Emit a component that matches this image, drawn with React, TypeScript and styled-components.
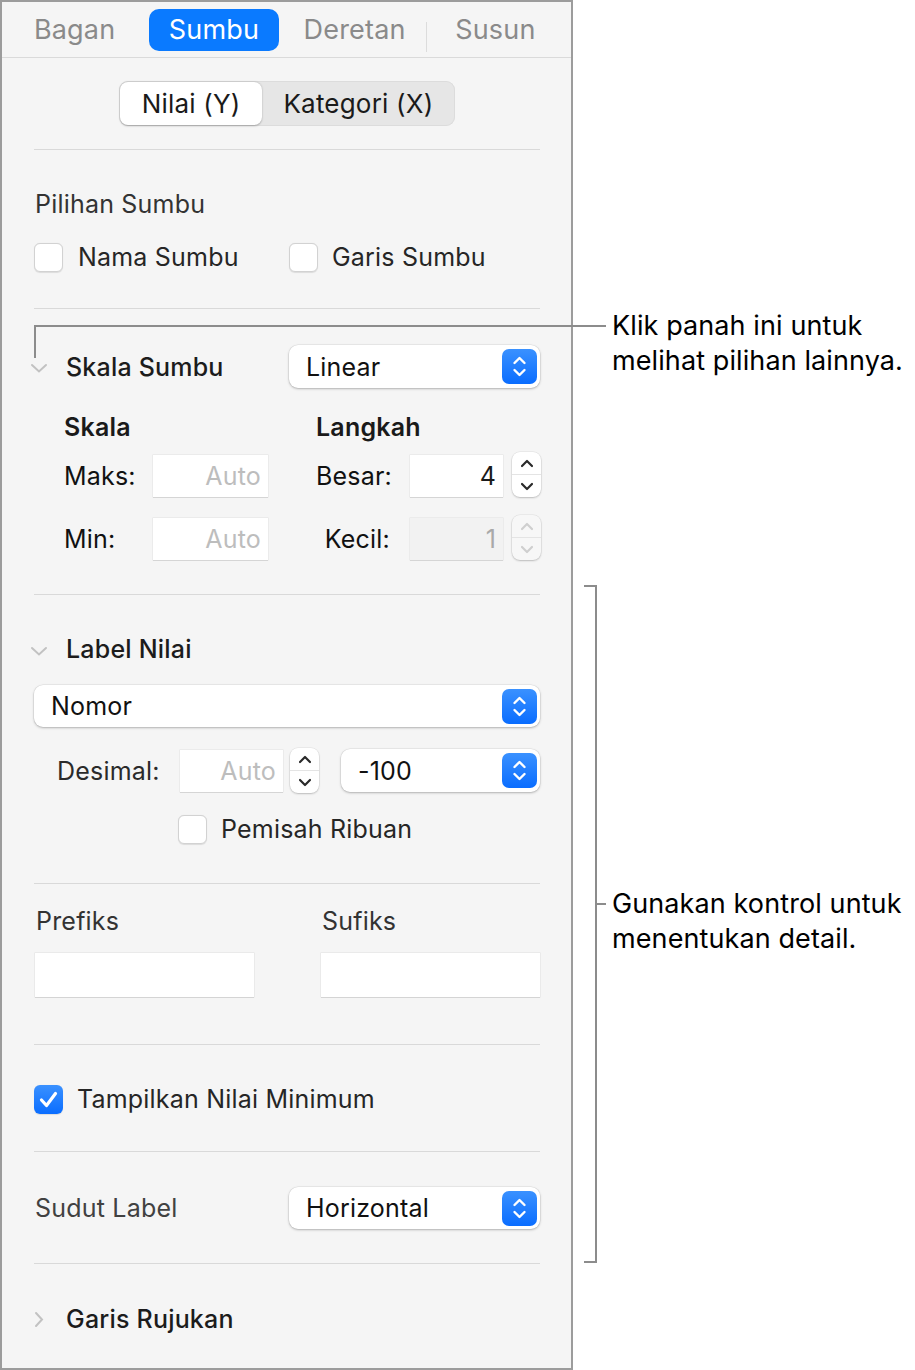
import React from 'react';
import styled, { createGlobalStyle } from 'styled-components';

const GlobalStyle = createGlobalStyle`
  html, body {
    margin: 0;
    padding: 0;
    background: #fff;
  }
  body {
    font-family: Inter, "Liberation Sans", sans-serif;
    font-size: 25px;
    letter-spacing: 0.2px;
    -webkit-font-smoothing: antialiased;
  }
`;

const tabs = ['Bagan', 'Sumbu', 'Deretan', 'Susun'];

const UpDown = () => (
  <svg width="35" height="35" viewBox="0 0 35 35">
    <path
      d="M12.5 14 L17.5 9 L22.5 14 M12.5 21 L17.5 26 L22.5 21"
      fill="none"
      stroke="#fff"
      strokeWidth="2.4"
      strokeLinecap="round"
      strokeLinejoin="round"
    />
  </svg>
);

const Disclosure: React.FC<{ open?: boolean }> = ({ open }) =>
  open ? (
    <svg width="18" height="11" viewBox="0 0 18 11">
      <path d="M2 2 L9 8.5 L16 2" fill="none" stroke="#c2c2c2" strokeWidth="2" strokeLinecap="round" />
    </svg>
  ) : (
    <svg width="10" height="17" viewBox="0 0 10 17">
      <path d="M2 2 L8 8.5 L2 15" fill="none" stroke="#c2c2c2" strokeWidth="2" strokeLinecap="round" />
    </svg>
  );

const PopUp: React.FC<{ value: string; h?: number }> = ({ value, h = 43 }) => (
  <PopButton $h={h}>
    <span>{value}</span>
    <PopBadge>
      <UpDown />
    </PopBadge>
  </PopButton>
);

const Stepper: React.FC<{ disabled?: boolean }> = ({ disabled }) => {
  const c = disabled ? '#cfcfcf' : '#2a2a2a';
  return (
    <StepBox $disabled={disabled}>
      <StepHalf>
        <svg width="14" height="9" viewBox="0 0 14 9">
          <path d="M2 7 L7 2 L12 7" fill="none" stroke={c} strokeWidth="2.2" strokeLinecap="round" strokeLinejoin="round" />
        </svg>
      </StepHalf>
      <StepHalf $bottom>
        <svg width="14" height="9" viewBox="0 0 14 9">
          <path d="M2 2 L7 7 L12 2" fill="none" stroke={c} strokeWidth="2.2" strokeLinecap="round" strokeLinejoin="round" />
        </svg>
      </StepHalf>
    </StepBox>
  );
};

const Check: React.FC<{ checked?: boolean; label: string; gap?: number }> = ({ checked, label, gap = 15 }) => (
  <CheckRow $gap={gap}>
    <Box $checked={checked}>
      {checked && (
        <svg width="29" height="29" viewBox="0 0 29 29">
          <path d="M7.5 15 L12.5 20.5 L21.5 8.5" fill="none" stroke="#fff" strokeWidth="3.2" strokeLinecap="round" strokeLinejoin="round" />
        </svg>
      )}
    </Box>
    <CheckText>{label}</CheckText>
  </CheckRow>
);

export default function App() {
  return (
    <Page>
      <GlobalStyle />
      <Panel>
        <TabBar>
          {tabs.map((t, i) => (
            <TabCell key={t} $sep={i === 3}>
              <Tab $active={t === 'Sumbu'}>{t}</Tab>
            </TabCell>
          ))}
        </TabBar>

        <Content>
          <Section $pt={23} $pb={23} $first>
            <Segmented>
              <Segment $active>Nilai (Y)</Segment>
              <Segment>Kategori (X)</Segment>
            </Segmented>
          </Section>

          <Section $pt={39} $pb={36} $gap={23}>
            <Title>Pilihan Sumbu</Title>
            <TwoCol>
              <Check label="Nama Sumbu" />
              <Check label="Garis Sumbu" gap={14} />
            </TwoCol>
          </Section>

          <Section $pt={36} $pb={34}>
            <TwoCol>
              <Header>
                <DiscCell>
                  <Disclosure open />
                </DiscCell>
                Skala Sumbu
              </Header>
              <PopUp value="Linear" />
            </TwoCol>
            <ScaleGrid>
              <SubHead $col="2 / 4">Skala</SubHead>
              <SubHead $col="5 / 8">Langkah</SubHead>
              <FieldLabel>Maks:</FieldLabel>
              <NumField $h={42}>Auto</NumField>
              <FieldLabel $right $col="5">Besar:</FieldLabel>
              <NumField $h={42} $value>4</NumField>
              <StepCell>
                <Stepper />
              </StepCell>
              <FieldLabel>Min:</FieldLabel>
              <NumField $h={42}>Auto</NumField>
              <FieldLabel $right $col="5">Kecil:</FieldLabel>
              <NumField $h={42} $disabled>1</NumField>
              <StepCell>
                <Stepper disabled />
              </StepCell>
            </ScaleGrid>
          </Section>

          <Section $pt={39} $pb={39} $gap={21}>
            <Header>
              <DiscCell>
                <Disclosure open />
              </DiscCell>
              Label Nilai
            </Header>
            <PopUp value="Nomor" h={42} />
            <DecimalRow>
              <DecimalLabel>Desimal:</DecimalLabel>
              <NumField $h={42} $w={103}>Auto</NumField>
              <Stepper />
              <PopUp value="-100" h={43} />
            </DecimalRow>
            <Indent>
              <Check label="Pemisah Ribuan" gap={14} />
            </Indent>
          </Section>

          <Section $pt={22} $pb={47}>
            <AffixGrid>
              <Title>Prefiks</Title>
              <Title>Sufiks</Title>
              <TextBox />
              <TextBox />
            </AffixGrid>
          </Section>

          <Section $pt={39} $pb={37}>
            <Check checked label="Tampilkan Nilai Minimum" gap={14} />
          </Section>

          <Section $pt={35} $pb={34}>
            <TwoCol>
              <Title $light>Sudut Label</Title>
              <PopUp value="Horizontal" h={42} />
            </TwoCol>
          </Section>

          <Section $pt={40} $pb={34}>
            <Header>
              <DiscCell $closed>
                <Disclosure />
              </DiscCell>
              Garis Rujukan
            </Header>
          </Section>
        </Content>
      </Panel>

      <Notes>
        <Callout $top={308} $indent={28}>
          Klik panah ini untuk
          <br />
          melihat pilihan lainnya.
        </Callout>
        <BracketRow>
          <Bracket />
          <Callout $top={301} $indent={15} $tick>
            Gunakan kontrol untuk
            <br />
            menentukan detail.
          </Callout>
        </BracketRow>
      </Notes>

      <Leader />
    </Page>
  );
}

const Page = styled.div`
  position: relative;
  display: flex;
  width: 915px;
  min-height: 1370px;
`;

const Panel = styled.div`
  flex: none;
  width: 569px;
  border: 2px solid #9c9c9c;
  background: #f5f5f5;
  align-self: flex-start;
`;

const TabBar = styled.div`
  display: grid;
  grid-template-columns: repeat(4, 1fr);
  align-items: center;
  height: 55px;
  padding: 0 6px 0 3px;
  border-bottom: 1px solid #dadada;
`;

const TabCell = styled.div<{ $sep?: boolean }>`
  position: relative;
  display: flex;
  justify-content: center;
  ${p =>
    p.$sep &&
    `&::before {
      content: '';
      position: absolute;
      left: 0;
      top: 13px;
      width: 1px;
      height: 30px;
      background: #dcdcdc;
    }`}
`;

const Tab = styled.div<{ $active?: boolean }>`
  height: 42px;
  line-height: 42px;
  padding: 0 20px;
  border-radius: 10px;
  font-size: 27px;
  color: ${p => (p.$active ? '#fff' : '#8a8a8a')};
  background: ${p => (p.$active ? '#0a7aff' : 'transparent')};
`;

const Content = styled.div`
  padding: 0 31px 0 32px;
`;

const Section = styled.div<{ $pt: number; $pb: number; $gap?: number; $first?: boolean }>`
  display: flex;
  flex-direction: column;
  gap: ${p => p.$gap ?? 0}px;
  padding: ${p => p.$pt}px 0 ${p => p.$pb}px;
  border-top: ${p => (p.$first ? 'none' : '1px solid #d9d9d9')};
`;

const Segmented = styled.div`
  align-self: center;
  display: flex;
  height: 43px;
  padding: 1px;
  border-radius: 9px;
  background: #e6e6e6;
  box-shadow: inset 0 0 0 1px #dcdcdc;
`;

const Segment = styled.div<{ $active?: boolean }>`
  padding: 0 ${p => (p.$active ? '22px' : '21px')};
  line-height: 43px;
  font-size: 26px;
  color: #1a1a1a;
  border-radius: 8px;
  background: ${p => (p.$active ? '#fff' : 'transparent')};
  box-shadow: ${p => (p.$active ? '0 0.5px 2px rgba(0,0,0,0.28)' : 'none')};
`;

const Title = styled.div<{ $light?: boolean }>`
  line-height: 30px;
  color: ${p => (p.$light ? '#414141' : '#333')};
  padding-left: 1px;
`;

const TwoCol = styled.div`
  display: grid;
  grid-template-columns: 255px 1fr;
  align-items: center;
`;

const CheckRow = styled.div<{ $gap: number }>`
  display: flex;
  align-items: center;
  gap: ${p => p.$gap}px;
  height: 30px;
`;

const Box = styled.div<{ $checked?: boolean }>`
  flex: none;
  width: 29px;
  height: 29px;
  box-sizing: border-box;
  border-radius: 6px;
  background: ${p => (p.$checked ? 'linear-gradient(#3a91ff, #0a6dff)' : '#fff')};
  border: ${p => (p.$checked ? 'none' : '1px solid #d2d2d2')};
  box-shadow: 0 0.5px 1px rgba(0, 0, 0, 0.1);
`;

const CheckText = styled.span`
  color: #262626;
`;

const Header = styled.div`
  display: flex;
  align-items: center;
  height: 30px;
  margin-left: -4px;
  font-weight: 500;
  color: #1c1c1c;
`;

const DiscCell = styled.div<{ $closed?: boolean }>`
  width: 36px;
  display: flex;
  align-items: center;
  padding-left: ${p => (p.$closed ? '4px' : '0')};
  box-sizing: border-box;
  margin-top: ${p => (p.$closed ? '0' : '4px')};
`;

const PopButton = styled.div<{ $h: number }>`
  display: flex;
  align-items: center;
  justify-content: space-between;
  height: ${p => p.$h}px;
  padding: 0 3px 0 17px;
  border-radius: 9px;
  background: #fff;
  color: #111;
  box-shadow: 0 0 0 0.5px rgba(0, 0, 0, 0.08), 0 1px 2.5px rgba(0, 0, 0, 0.25);
`;

const PopBadge = styled.div`
  width: 35px;
  height: 35px;
  border-radius: 7px;
  background: linear-gradient(#3a91ff, #0a6dff);
`;

const ScaleGrid = styled.div`
  display: grid;
  grid-template-columns: 30px 89px 115px 48px 94px 93px 37px;
  grid-template-rows: 54px 55px 63px;
  align-items: end;
`;

const SubHead = styled.div<{ $col: string }>`
  grid-column: ${p => p.$col};
  line-height: 30px;
  font-weight: 600;
  color: #1a1a1a;
`;

const FieldLabel = styled.div<{ $right?: boolean; $col?: string }>`
  grid-column: ${p => p.$col ?? '2'};
  line-height: 42px;
  color: #111;
  text-align: ${p => (p.$right ? 'right' : 'left')};
  padding-right: ${p => (p.$right ? '20px' : '0')};
`;

const NumField = styled.div<{ $h: number; $w?: number; $disabled?: boolean; $value?: boolean }>`
  height: ${p => p.$h}px;
  ${p => (p.$w ? `width: ${p.$w}px;` : '')}
  box-sizing: border-box;
  padding-right: 7px;
  text-align: right;
  line-height: ${p => p.$h}px;
  background: ${p => (p.$disabled ? '#f2f2f2' : '#fff')};
  color: ${p => (p.$value ? '#1a1a1a' : p.$disabled ? '#a9a9a9' : '#bdbdbd')};
  box-shadow: 0 0 0 0.5px #e2e2e2, 0 1px 0 #c9c9c9;
`;

const StepCell = styled.div`
  justify-self: end;
  margin-right: -1px;
`;

const StepBox = styled.div<{ $disabled?: boolean }>`
  display: flex;
  flex-direction: column;
  width: 29px;
  height: 45px;
  border-radius: 8px;
  background: ${p => (p.$disabled ? '#f7f7f7' : '#fff')};
  box-shadow: 0 0 0 0.5px rgba(0, 0, 0, 0.08), 0 1px 2px rgba(0, 0, 0, 0.2);
  overflow: hidden;
`;

const StepHalf = styled.div<{ $bottom?: boolean }>`
  flex: 1;
  display: flex;
  align-items: center;
  justify-content: center;
  border-top: ${p => (p.$bottom ? '1px solid #e4e4e4' : 'none')};
`;

const DecimalRow = styled.div`
  display: grid;
  grid-template-columns: 116px 103px 29px 1fr;
  align-items: center;
  column-gap: 7px;
  padding-left: 23px;
  height: 45px;
  & > :last-child {
    margin-left: 15px;
  }
`;

const DecimalLabel = styled.div`
  color: #2a2a2a;
  white-space: nowrap;
`;

const Indent = styled.div`
  padding-left: 144px;
`;

const AffixGrid = styled.div`
  display: grid;
  grid-template-columns: 219px 219px;
  column-gap: 67px;
  row-gap: 17px;
  padding-left: 1px;
`;

const TextBox = styled.div`
  height: 44px;
  background: #fff;
  box-shadow: 0 0 0 0.5px #e0e0e0, 0 1px 0 #c9c9c9;
`;

const Notes = styled.div`
  flex: 1;
  display: flex;
  flex-direction: column;
  padding-left: 11px;
`;

const Callout = styled.div<{ $top: number; $indent: number; $tick?: boolean }>`
  position: relative;
  margin-top: ${p => p.$top}px;
  padding-left: ${p => p.$indent}px;
  font-size: 27px;
  letter-spacing: 0.1px;
  line-height: 35px;
  color: #000;
  white-space: nowrap;
  align-self: flex-start;
  ${p =>
    p.$tick &&
    `&::before {
      content: '';
      position: absolute;
      left: 0;
      top: 17px;
      width: 9px;
      height: 2px;
      background: #8c8c8c;
    }`}
`;

const BracketRow = styled.div`
  display: flex;
  align-items: flex-start;
  margin-top: 207px;
`;

const Bracket = styled.div`
  flex: none;
  width: 11px;
  height: 674px;
  border: 2px solid #8c8c8c;
  border-left: none;
`;

/* leader from the first note into the panel */
const Leader = styled.div`
  position: absolute;
  left: 34px;
  top: 325px;
  width: 570px;
  height: 31px;
  border-top: 2px solid #8c8c8c;
  border-left: 2px solid #8c8c8c;
  pointer-events: none;
`;
